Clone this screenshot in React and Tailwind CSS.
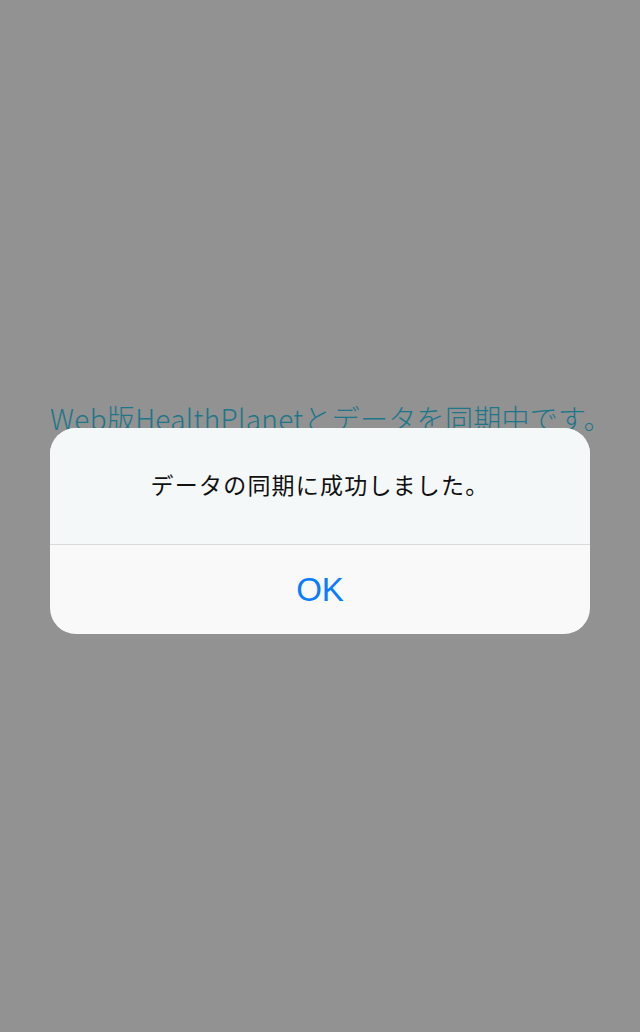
import React from "react";

const App = () => {
    return (
        <div
            className="relative w-full h-[1032px] overflow-hidden bg-[#929292]"
            style={{fontFamily: '"Noto Sans CJK JP", "Noto Sans", sans-serif'}}
        >
            <div className="pt-[400px] pl-[50px] whitespace-nowrap">
                <p className="text-[28px] leading-[36px] font-light text-[#1d7689] tracking-[0.3px]">
                    Web版HealthPlanetとデータを同期中です。
                </p>
            </div>

            <div className="absolute inset-0 flex items-start justify-center pt-[428px]">
                <div className="w-[540px] rounded-[26px] overflow-hidden bg-[#f9f9f9]">
                    <div className="h-[117px] flex items-center justify-center bg-[#f5f8f9] border-b border-[#d9d9d9]">
                        <p className="text-[23px] text-[#111] tracking-[1.2px] pb-[3px]">データの同期に成功しました。</p>
                    </div>
                    <div className="h-[89px] flex items-center justify-center">
                        <span
                            className="text-[33px] text-[#0a7cff]"
                            style={{fontFamily: '"Liberation Sans", Arial, sans-serif'}}
                        >
                            OK
                        </span>
                    </div>
                </div>
            </div>
        </div>
    );
};

export default App;
